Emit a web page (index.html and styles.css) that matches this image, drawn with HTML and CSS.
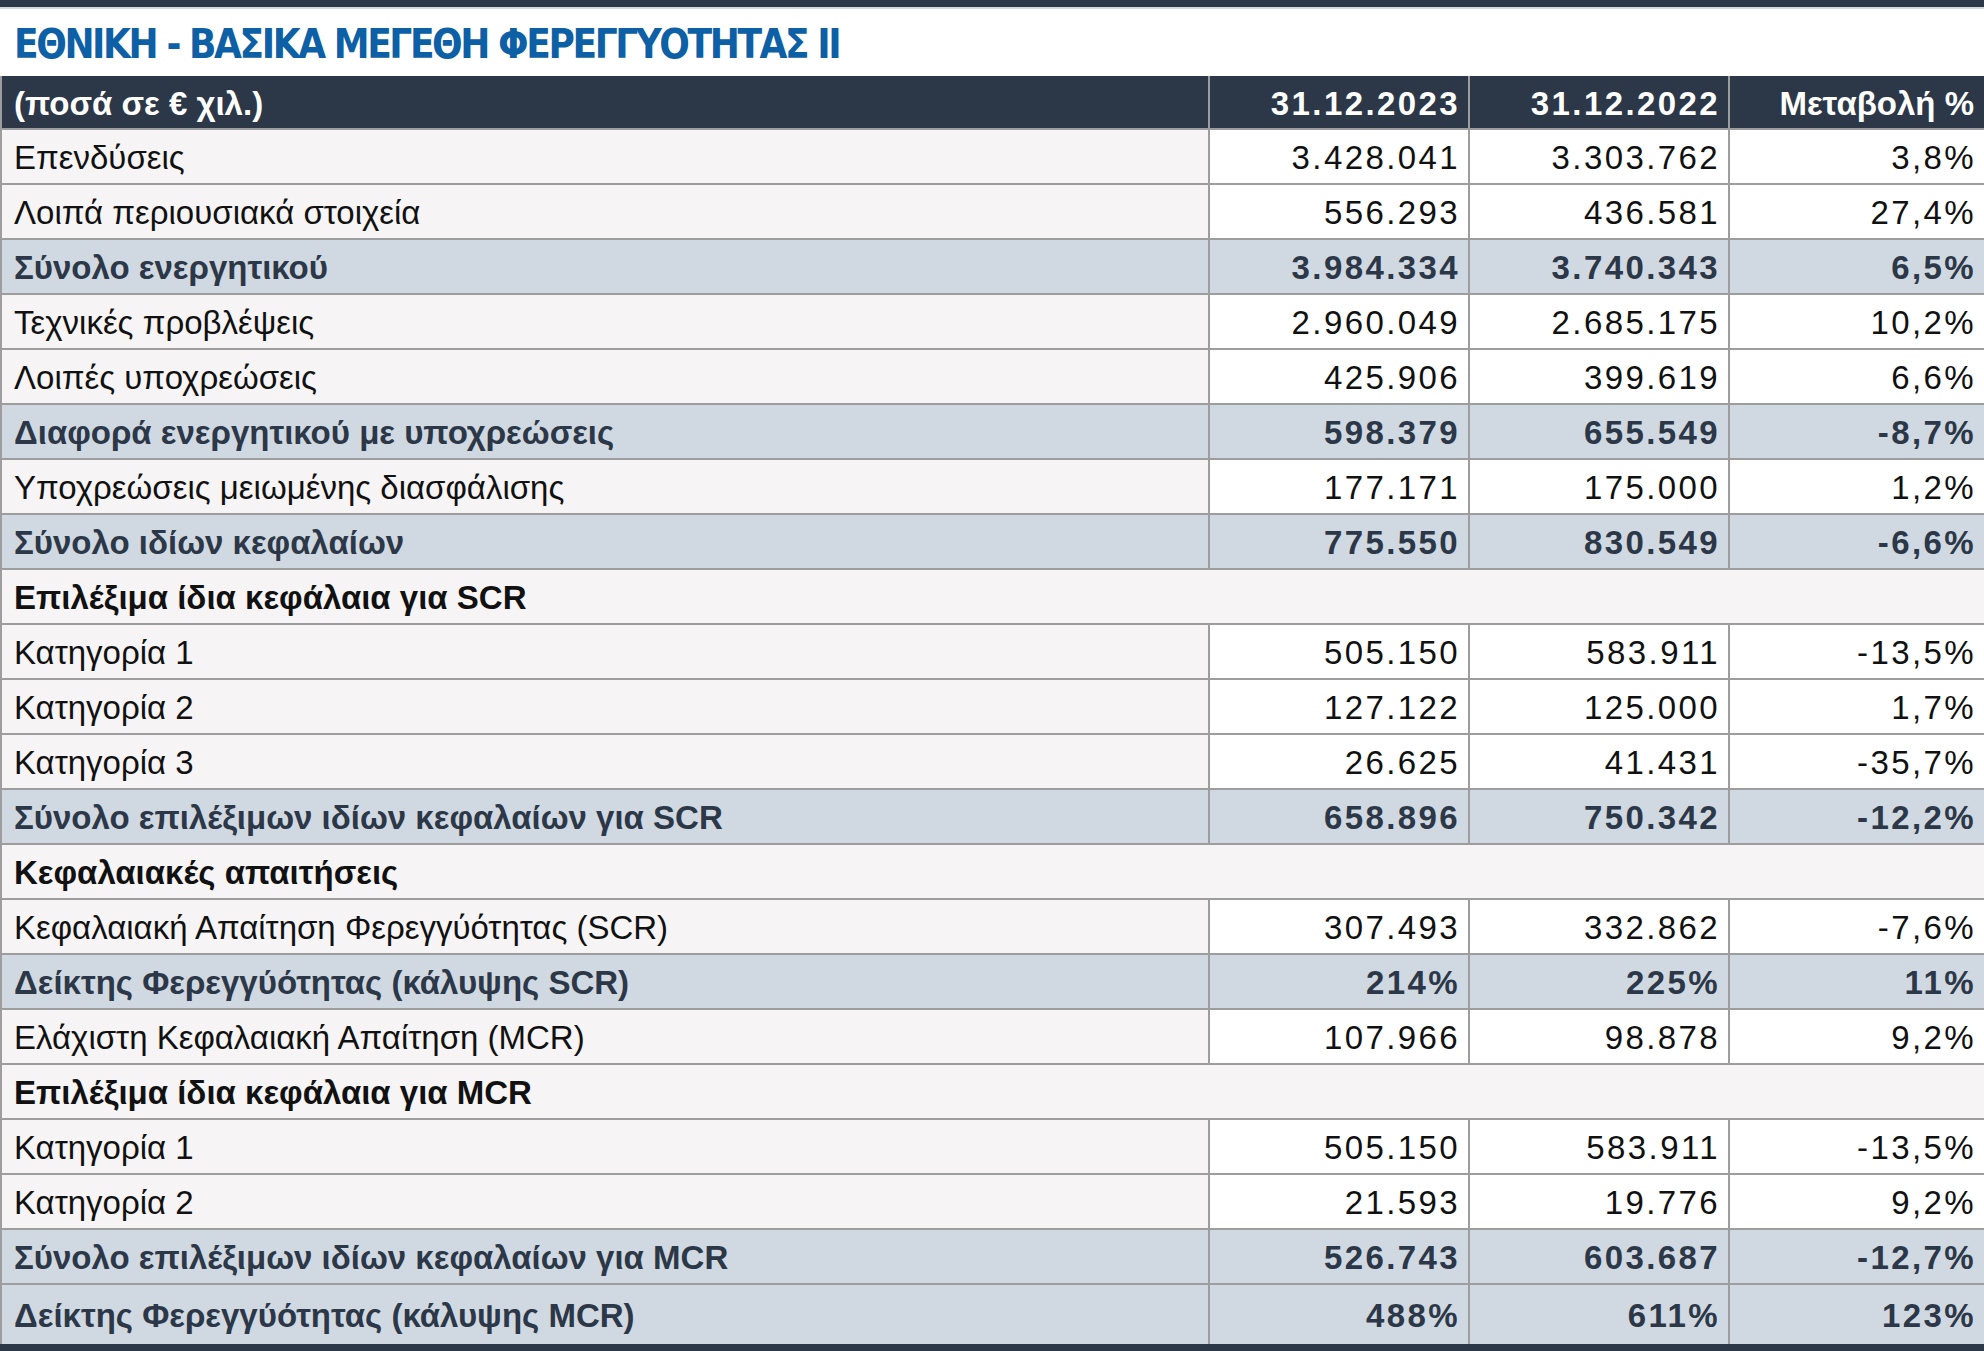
FILE: index.html
```html
<!DOCTYPE html>
<html lang="el">
<head>
<meta charset="utf-8">
<title>ΕΘΝΙΚΗ - ΒΑΣΙΚΑ ΜΕΓΕΘΗ ΦΕΡΕΓΓΥΟΤΗΤΑΣ ΙΙ</title>
<link rel="stylesheet" href="styles.css">
</head>
<body>
<div class="page">
  <div class="topbar"></div>
  <div class="title-wrap"><h1 class="title">ΕΘΝΙΚΗ - ΒΑΣΙΚΑ ΜΕΓΕΘΗ ΦΕΡΕΓΓΥΟΤΗΤΑΣ II</h1></div>
  <div class="table">
    <div class="row head"><div class="c lab">(ποσά σε € χιλ.)</div><div class="c num">31.12.2023</div><div class="c num">31.12.2022</div><div class="c num plain">Μεταβολή %</div></div>
    <div class="row"><div class="c lab">Επενδύσεις</div><div class="c num">3.428.041</div><div class="c num">3.303.762</div><div class="c num">3,8%</div></div>
    <div class="row"><div class="c lab">Λοιπά περιουσιακά στοιχεία</div><div class="c num">556.293</div><div class="c num">436.581</div><div class="c num">27,4%</div></div>
    <div class="row sum"><div class="c lab">Σύνολο ενεργητικού</div><div class="c num">3.984.334</div><div class="c num">3.740.343</div><div class="c num">6,5%</div></div>
    <div class="row"><div class="c lab">Τεχνικές προβλέψεις</div><div class="c num">2.960.049</div><div class="c num">2.685.175</div><div class="c num">10,2%</div></div>
    <div class="row"><div class="c lab">Λοιπές υποχρεώσεις</div><div class="c num">425.906</div><div class="c num">399.619</div><div class="c num">6,6%</div></div>
    <div class="row sum"><div class="c lab">Διαφορά ενεργητικού με υποχρεώσεις</div><div class="c num">598.379</div><div class="c num">655.549</div><div class="c num">-8,7%</div></div>
    <div class="row"><div class="c lab">Υποχρεώσεις μειωμένης διασφάλισης</div><div class="c num">177.171</div><div class="c num">175.000</div><div class="c num">1,2%</div></div>
    <div class="row sum"><div class="c lab">Σύνολο ιδίων κεφαλαίων</div><div class="c num">775.550</div><div class="c num">830.549</div><div class="c num">-6,6%</div></div>
    <div class="row section"><div class="c lab">Επιλέξιμα ίδια κεφάλαια για SCR</div></div>
    <div class="row"><div class="c lab">Κατηγορία 1</div><div class="c num">505.150</div><div class="c num">583.911</div><div class="c num">-13,5%</div></div>
    <div class="row"><div class="c lab">Κατηγορία 2</div><div class="c num">127.122</div><div class="c num">125.000</div><div class="c num">1,7%</div></div>
    <div class="row"><div class="c lab">Κατηγορία 3</div><div class="c num">26.625</div><div class="c num">41.431</div><div class="c num">-35,7%</div></div>
    <div class="row sum"><div class="c lab">Σύνολο επιλέξιμων ιδίων κεφαλαίων για SCR</div><div class="c num">658.896</div><div class="c num">750.342</div><div class="c num">-12,2%</div></div>
    <div class="row section"><div class="c lab">Κεφαλαιακές απαιτήσεις</div></div>
    <div class="row"><div class="c lab">Κεφαλαιακή Απαίτηση Φερεγγύότητας (SCR)</div><div class="c num">307.493</div><div class="c num">332.862</div><div class="c num">-7,6%</div></div>
    <div class="row sum"><div class="c lab">Δείκτης Φερεγγύότητας (κάλυψης SCR)</div><div class="c num">214%</div><div class="c num">225%</div><div class="c num">11%</div></div>
    <div class="row"><div class="c lab">Ελάχιστη Κεφαλαιακή Απαίτηση (MCR)</div><div class="c num">107.966</div><div class="c num">98.878</div><div class="c num">9,2%</div></div>
    <div class="row section"><div class="c lab">Επιλέξιμα ίδια κεφάλαια για MCR</div></div>
    <div class="row"><div class="c lab">Κατηγορία 1</div><div class="c num">505.150</div><div class="c num">583.911</div><div class="c num">-13,5%</div></div>
    <div class="row"><div class="c lab">Κατηγορία 2</div><div class="c num">21.593</div><div class="c num">19.776</div><div class="c num">9,2%</div></div>
    <div class="row sum"><div class="c lab">Σύνολο επιλέξιμων ιδίων κεφαλαίων για MCR</div><div class="c num">526.743</div><div class="c num">603.687</div><div class="c num">-12,7%</div></div>
    <div class="row sum last"><div class="c lab">Δείκτης Φερεγγύότητας (κάλυψης MCR)</div><div class="c num">488%</div><div class="c num">611%</div><div class="c num">123%</div></div>
  </div>
  <div class="bottombar"></div>
</div>
</body>
</html>
```
FILE: styles.css
```css
html, body {
  margin: 0;
  padding: 0;
  background: #ffffff;
}
.page {
  width: 1984px;
  font-family: "Liberation Sans", Arial, sans-serif;
  font-size: 33px;
  color: #111111;
}
.topbar {
  height: 7px;
  background: #2c3747;
  border-bottom: 2px solid #d3d7dc;
}
.title-wrap {
  height: 67px;
  display: flex;
  align-items: center;
  padding-left: 14px;
}
.title {
  margin: 0;
  font-family: "DejaVu Sans", sans-serif;
  font-stretch: condensed;
  font-weight: bold;
  font-size: 40px;
  color: #0d5fa6;
  letter-spacing: -2.4px;
  line-height: 1;
  padding-top: 2px;
}
.table {
  display: flex;
  flex-direction: column;
}
.row {
  display: grid;
  grid-template-columns: 1208px 260px 260px 1fr;
  height: 55px;
  box-sizing: border-box;
  border-bottom: 2px solid #9d9d9d;
}
.c {
  display: flex;
  align-items: center;
  box-sizing: border-box;
  border-left: 2px solid #9d9d9d;
  padding: 3px 10px 0 12px;
  white-space: nowrap;
  background: #ffffff;
}
.c.lab {
  background: #f6f4f5;
}
.c.num {
  justify-content: flex-end;
  padding-right: 8px;
  letter-spacing: 2.4px;
}
.c.num.plain {
  letter-spacing: 0;
  padding-right: 10px;
}
.row.head {
  height: 54px;
  background: #2c3747;
}
.row.head .c {
  background: #2c3747;
  color: #ffffff;
  font-weight: bold;
  padding-top: 4px;
}
.row.sum .c {
  background: #d0d9e1;
  color: #2c3747;
  font-weight: bold;
}
.row.section {
  grid-template-columns: 1fr;
}
.row.section .c {
  background: #f6f4f5;
  font-weight: bold;
  color: #111111;
}
.row.last {
  height: 59px;
  border-bottom: none;
}
.bottombar {
  height: 7px;
  background: #2c3747;
}
```
